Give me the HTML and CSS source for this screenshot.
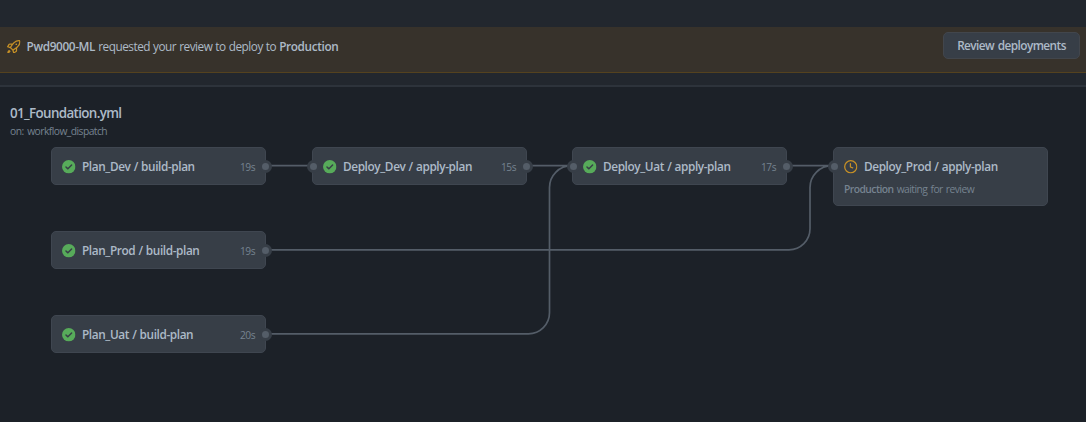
FILE: index.html
```html
<!DOCTYPE html>
<html lang="en">
<head>
<meta charset="utf-8">
<title>01_Foundation.yml</title>
<link rel="stylesheet" href="styles.css">
</head>
<body>
<svg class="defs" aria-hidden="true">
  <symbol id="check" viewBox="0 0 16 16"><circle cx="8" cy="8" r="8" fill="#57ab5a"/><path d="M4.7 8.3 7 10.5l4.4-4.5" fill="none" stroke="#373e47" stroke-width="1.7" stroke-linecap="round" stroke-linejoin="round"/></symbol>
  <symbol id="clock" viewBox="0 0 16 16"><circle cx="8" cy="8" r="7.2" fill="none" stroke="#c69026" stroke-width="1.5"/><path d="M7.6 4.2v4.1l2.7 1" fill="none" stroke="#c69026" stroke-width="1.5" stroke-linecap="round" stroke-linejoin="round"/></symbol>
  <symbol id="rocket" viewBox="0 0 16 16"><path fill="#c69026" d="M14.064 0h.186C15.216 0 16 .784 16 1.75v.186a8.752 8.752 0 0 1-2.564 6.186l-.458.459c-.314.314-.641.616-.979.904v3.207c0 .608-.315 1.172-.833 1.49l-2.774 1.707a.749.749 0 0 1-1.11-.418l-.954-3.102a1.214 1.214 0 0 1-.145-.125L3.754 9.816a1.218 1.218 0 0 1-.124-.145L.528 8.717a.749.749 0 0 1-.418-1.11l1.71-2.774A1.748 1.748 0 0 1 3.31 4h3.204c.288-.338.59-.665.904-.979l.459-.458A8.749 8.749 0 0 1 14.064 0ZM8.938 3.623h-.002l-.458.458c-.76.76-1.437 1.598-2.02 2.5l-1.5 2.317 2.143 2.143 2.317-1.5c.902-.583 1.74-1.26 2.499-2.02l.459-.458a7.25 7.25 0 0 0 2.123-5.127V1.75a.25.25 0 0 0-.25-.25h-.186a7.249 7.249 0 0 0-5.125 2.123ZM3.56 14.56c-.732.732-2.334 1.045-3.005 1.148a.234.234 0 0 1-.201-.064.234.234 0 0 1-.064-.201c.103-.671.416-2.273 1.15-3.003a1.502 1.502 0 1 1 2.12 2.12Zm6.94-3.935c-.088.06-.177.118-.266.175l-2.35 1.521.548 1.783 1.949-1.2a.25.25 0 0 0 .119-.213ZM3.678 8.116 5.2 5.766c.058-.09.117-.178.176-.266H3.309a.25.25 0 0 0-.213.119l-1.2 1.95ZM12 5a1 1 0 1 1-2 0 1 1 0 0 1 2 0Z"/></symbol>
</svg>
<div class="banner">
  <svg class="rocket"><use href="#rocket"/></svg>
  <p class="message"><b>Pwd9000-ML</b> requested your review to deploy to <b>Production</b></p>
  <button class="review">Review deployments</button>
</div>
<main class="workflow">
  <h1 class="title">01_Foundation.yml</h1>
  <p class="trigger">on: workflow_dispatch</p>
  <svg class="edges" viewBox="0 87 1086 335">
    <path d="M266 165.600H312M527 165.600H573M788 165.600H834M266 249.800H789A21 21 0 0 0 810 228.800V187.600A22 22 0 0 1 832 165.600M266 333.800H528.500A21 21 0 0 0 549.500 312.800V187.600A22 22 0 0 1 571.500 165.600"/>
  </svg>
  <section class="job plan-dev out"><div class="row"><svg class="status"><use href="#check"/></svg><span class="name">Plan_Dev / build-plan</span><span class="time">19s</span></div></section>
  <section class="job plan-prod out"><div class="row"><svg class="status"><use href="#check"/></svg><span class="name">Plan_Prod / build-plan</span><span class="time">19s</span></div></section>
  <section class="job plan-uat out"><div class="row"><svg class="status"><use href="#check"/></svg><span class="name">Plan_Uat / build-plan</span><span class="time">20s</span></div></section>
  <section class="job deploy-dev in out"><div class="row"><svg class="status"><use href="#check"/></svg><span class="name">Deploy_Dev / apply-plan</span><span class="time">15s</span></div></section>
  <section class="job deploy-uat in out"><div class="row"><svg class="status"><use href="#check"/></svg><span class="name">Deploy_Uat / apply-plan</span><span class="time">17s</span></div></section>
  <section class="job deploy-prod in"><div class="row"><svg class="status"><use href="#clock"/></svg><span class="name">Deploy_Prod / apply-plan</span></div><p class="waiting"><b>Production</b> waiting for review</p></section>
</main>
</body>
</html>
```

FILE: styles.css
```css
*, *::before, *::after { box-sizing: border-box; }
body { margin: 0; padding-top: 27px; height: 422px; overflow: hidden; background: #22272e; color: #adbac7; font-family: "Open Sans", "Noto Sans", sans-serif; font-size: 11.8px; }
h1, p { margin: 0; }
b { font-weight: 600; }
.defs { display: none; }
.banner { height: 46px; padding: 0 6px 8px 7px; display: flex; align-items: center; background: #37322b; border-bottom: 1px solid #54421f; }
.rocket { width: 13.5px; height: 13.5px; margin-right: 6px; position: relative; top: 1px; }
.message { flex: 1; white-space: nowrap; letter-spacing: -0.48px; word-spacing: 0.4px; }
.message b { letter-spacing: -0.36px; }
.review { width: 137px; height: 27px; padding: 0 0 2px; border: 1px solid #42464c; border-radius: 5px; background: #373e47; color: #adbac7; font: 600 11.8px "Open Sans", sans-serif; letter-spacing: -0.55px; word-spacing: 1px; }
.workflow { position: relative; height: 337px; margin-top: 12px; padding: 17px 10px; border-top: 2px solid #2d333b; background: #1c2128; }
.title { font-size: 13.4px; font-weight: 600; line-height: 18px; letter-spacing: -0.65px; }
.trigger { margin-top: 1px; color: #768390; font-size: 10.3px; line-height: 16px; letter-spacing: -0.55px; word-spacing: 1.5px; }
.edges { position: absolute; left: 0; top: 0; width: 1086px; height: 335px; fill: none; stroke: #545d68; stroke-width: 1.7; }
.job { position: absolute; width: 215px; height: 38px; padding: 0 10px; border: 1px solid #3f4650; border-radius: 5px; background: #373e47; }
.row { height: 36px; display: flex; align-items: center; }
.status { width: 13.5px; height: 13.5px; margin-right: 6.5px; position: relative; top: 1px; }
.name { flex: 1; font-weight: 600; white-space: nowrap; letter-spacing: -0.39px; word-spacing: 0.5px; }
.time { color: #768390; font-size: 10.2px; letter-spacing: -0.5px; position: relative; top: 1px; }
.waiting { margin-top: -3px; color: #768390; font-size: 10.3px; line-height: 16px; white-space: nowrap; letter-spacing: -0.53px; word-spacing: 0.9px; }
.in::before, .out::after { content: ""; position: absolute; top: 12px; width: 13px; height: 13px; border: 3px solid #373e47; border-radius: 50%; background: #545d68; }
.in::before { left: -6px; }
.out::after { right: -7px; }
.plan-dev { left: 51px; top: 60px; }
.plan-prod { left: 51px; top: 144px; }
.plan-uat { left: 51px; top: 228px; }
.deploy-dev { left: 312px; top: 60px; }
.deploy-uat { left: 572px; top: 60px; }
.deploy-prod { left: 833px; top: 60px; height: 59px; }
```
